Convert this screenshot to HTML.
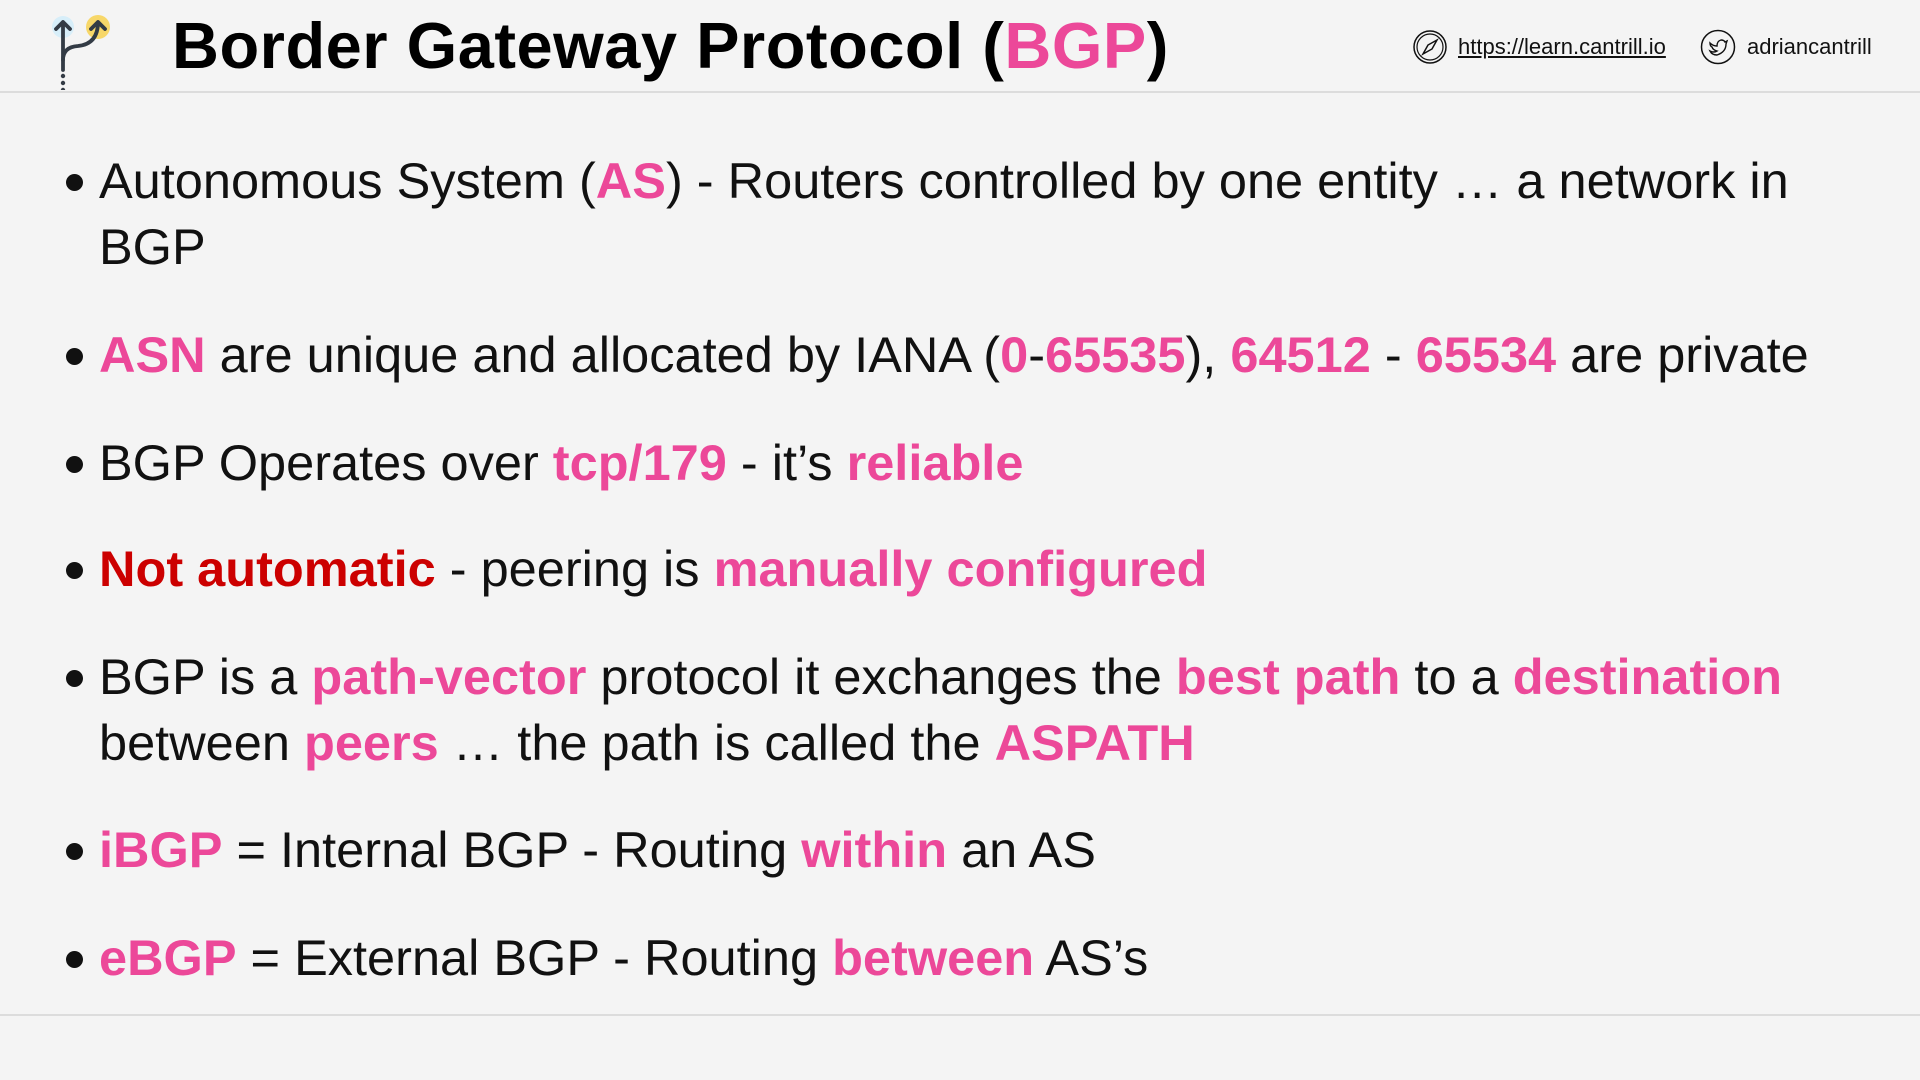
<!DOCTYPE html>
<html><head><meta charset="utf-8"><style>
body{margin:0;width:1920px;height:1080px;background:#f4f4f4;overflow:hidden;font-family:"Liberation Sans",sans-serif;color:#111;position:relative}
.hdr{position:absolute;left:0;top:0;width:1920px;height:91px;border-bottom:2px solid #dcdcdc}
.title{position:absolute;left:172px;top:8px;font-size:65px;font-weight:bold;color:#000;letter-spacing:0.5px}
.p{color:#ec4899;font-weight:bold}
.r{color:#cc0000;font-weight:bold}
.ln{position:absolute;left:99px;font-size:50.5px;white-space:nowrap;line-height:66px}
.b{position:absolute;left:66px;width:17px;height:17px;border-radius:50%;background:#111}
.foot{position:absolute;left:0;top:1014px;width:1920px;border-top:2px solid #dcdcdc}
.right{position:absolute;top:34px;font-size:22px;color:#111}
</style></head><body>
<div class="hdr"></div>
<svg style="position:absolute;left:48px;top:10px" width="70" height="80" viewBox="0 0 70 80">
<circle cx="15" cy="17" r="11" fill="#d7eef9"/><circle cx="50" cy="17" r="12" fill="#f7d769"/>
<path d="M15 60 V12 M8 19 L15 12 L22 19" stroke="#333b45" stroke-width="3.8" fill="none" stroke-linecap="round" stroke-linejoin="round"/>
<path d="M15 50 Q15 37 30 36 Q50 34 50 12 M43 19 L50 12 L57 19" stroke="#333b45" stroke-width="3.8" fill="none" stroke-linecap="round" stroke-linejoin="round"/>
<circle cx="15" cy="66" r="2.2" fill="#333b45"/><circle cx="15" cy="73" r="2.2" fill="#333b45"/><circle cx="15" cy="80" r="2.2" fill="#333b45"/>
</svg>
<div class="title">Border Gateway Protocol (<span class="p">BGP</span>)</div>
<svg style="position:absolute;left:1412px;top:29px" width="36" height="36" viewBox="0 0 36 36"><circle cx="18" cy="18" r="16" fill="none" stroke="#111" stroke-width="1.5"/><circle cx="18" cy="18" r="13" fill="none" stroke="#111" stroke-width="1.2"/><path d="M25 11 L20 20 L11 25 L16 16 Z" fill="none" stroke="#111" stroke-width="1.5"/></svg>
<div class="right" style="left:1458px;text-decoration:underline">https://learn.cantrill.io</div>
<svg style="position:absolute;left:1700px;top:29px" width="36" height="36" viewBox="0 0 36 36"><circle cx="18" cy="18" r="16.5" fill="none" stroke="#111" stroke-width="1.5"/><path d="M10 22 Q14 24 17 22 Q13 21 12 18 Q10 17 10 14 Q13 17 17 17 Q17 12 21 11 Q24 11 25 13 L27 12 L26 15 Q26 23 17 26 Q12 26 10 22 Z" fill="none" stroke="#111" stroke-width="1.4"/></svg>
<div class="right" style="left:1747px">adriancantrill</div>

<div class="b" style="top:174px"></div><div class="ln" style="top:148px">Autonomous System (<span class="p">AS</span>) - Routers controlled by one entity … a network in</div>
<div class="ln" style="top:214px">BGP</div>
<div class="b" style="top:348px"></div><div class="ln" style="top:322px"><span class="p">ASN</span> are unique and allocated by IANA (<span class="p">0</span>-<span class="p">65535</span>), <span class="p">64512</span> - <span class="p">65534</span> are private</div>
<div class="b" style="top:456px"></div><div class="ln" style="top:430px">BGP Operates over <span class="p">tcp/179</span> - it’s <span class="p">reliable</span></div>
<div class="b" style="top:562px"></div><div class="ln" style="top:536px"><span class="r">Not automatic</span> - peering is <span class="p">manually configured</span></div>
<div class="b" style="top:670px"></div><div class="ln" style="top:644px">BGP is a <span class="p">path-vector</span> protocol it exchanges the <span class="p">best path</span> to a <span class="p">destination</span></div>
<div class="ln" style="top:710px">between <span class="p">peers</span> … the path is called the <span class="p">ASPATH</span></div>
<div class="b" style="top:843px"></div><div class="ln" style="top:817px"><span class="p">iBGP</span> = Internal BGP - Routing <span class="p">within</span> an AS</div>
<div class="b" style="top:951px"></div><div class="ln" style="top:925px"><span class="p">eBGP</span> = External BGP - Routing <span class="p">between</span> AS’s</div>
<div class="foot"></div>
</body></html>
